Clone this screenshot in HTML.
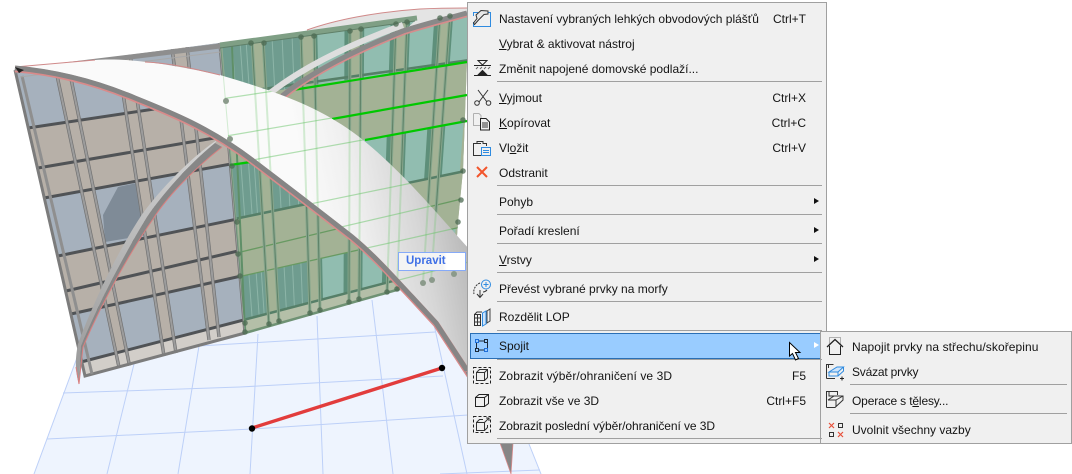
<!DOCTYPE html>
<html><head><meta charset="utf-8">
<style>
html,body{margin:0;padding:0;background:#fff;width:1072px;height:474px;overflow:hidden}
#s{position:absolute;left:0;top:0}
.menu{position:absolute;background:#f0f0f0;border:1px solid #a0a0a0;box-sizing:border-box}
.t,.k{position:absolute;font:12px/16px "Liberation Sans",sans-serif;color:#141414;white-space:nowrap}
.t{left:499px}
.k{right:266px}
.st{left:852px}
.sep{position:absolute;height:1px;background:#a0a0a0}
.hl{position:absolute;left:470px;top:333px;width:353px;height:26px;background:#99ccff;border:1px solid #2a6fb5;box-sizing:border-box}
.up{position:absolute;left:398px;top:252px;width:68px;height:19px;box-sizing:border-box;border:1.5px solid #86aaf8;background:linear-gradient(90deg,#f4f4f4 0,#f4f4f4 66%,#fff 72%);font:bold 11.5px/17px "Liberation Sans",sans-serif;color:#3f70e6;padding-left:7px}
</style></head><body>
<svg id="s" width="1072" height="474" viewBox="0 0 1072 474">
<defs>
<linearGradient id="sh" gradientUnits="userSpaceOnUse" x1="300" y1="160" x2="470" y2="126">
<stop offset="0" stop-color="#fafafa"/><stop offset=".25" stop-color="#f0f0f0"/><stop offset=".6" stop-color="#d6d6d6"/><stop offset="1" stop-color="#a8a8a8"/></linearGradient>
<linearGradient id="lg" gradientUnits="userSpaceOnUse" x1="80" y1="380" x2="200" y2="150">
<stop offset="0" stop-color="#9a9a9a"/><stop offset="1" stop-color="#d2d2d2"/></linearGradient>
<clipPath id="cs"><path d="M15,67 L95,60 C125,58 160,62 220,75 C270,90 320,105 363,140 C400,170 430,205 470,250 L470,376 L436,323 L412,297 C395,279 375,256 352,237 C320,212 285,185 252,160 C210,128 170,112 135,98 C92,80 50,71 15,68Z"/></clipPath>
<clipPath id="cg"><polygon points="220,43 470,9 470,270 245,333"/></clipPath>
<clipPath id="cw"><polygon points="15,70 470,9.500 467,60 463,170 458,222 453,290 85,376"/></clipPath>
<clipPath id="rows"><polygon points="15,70 470,9.500 470,61.500 28,128"/><polygon points="44,198 470,120.500 470,171 58,256"/><polygon points="71,314 470,225 470,261.600 81,362"/></clipPath>
<g id="ml">
<line x1="55" y1="66" x2="120" y2="372"/><line x1="68" y1="64" x2="130" y2="368"/>
<line x1="117" y1="55" x2="164" y2="356"/><line x1="130" y1="54" x2="176" y2="353"/>
<line x1="172" y1="48" x2="209" y2="340"/><line x1="187" y1="47" x2="219" y2="337"/>
<line x1="220" y1="43" x2="245" y2="332"/>
<line x1="252" y1="40" x2="269" y2="326"/><line x1="263" y1="38" x2="279" y2="323"/>
<line x1="301" y1="33" x2="310" y2="315"/><line x1="314" y1="31" x2="320" y2="312"/>
<line x1="350" y1="27" x2="349" y2="304"/><line x1="361" y1="25" x2="359" y2="301"/>
<line x1="396" y1="22" x2="387" y2="294"/><line x1="407" y1="20" x2="397" y2="291"/>
<line x1="440" y1="15" x2="423" y2="283"/><line x1="450" y1="14" x2="431" y2="281"/>
</g>
<g id="hz">
<line x1="28" y1="128" x2="470" y2="61.500"/><line x1="38" y1="168" x2="470" y2="94.500"/>
<line x1="44" y1="198" x2="470" y2="120.500"/><line x1="58" y1="256" x2="470" y2="171"/>
<line x1="66" y1="291" x2="470" y2="197"/><line x1="71" y1="314" x2="470" y2="225"/>
<line x1="81" y1="362" x2="470" y2="261.600"/>
</g>
</defs>
<!-- floor -->
<polygon points="78,355 470,255 525,434 541,474 34,474" fill="#eef4fe"/>
<g stroke="#bdd0f8" stroke-width="1" fill="none">
<line x1="78" y1="355" x2="34" y2="474"/><line x1="525" y1="434" x2="541" y2="474"/>
<line x1="134" y1="364" x2="107" y2="474"/><line x1="199" y1="346" x2="178" y2="474"/>
<line x1="258" y1="334" x2="250" y2="474"/><line x1="317" y1="316" x2="323" y2="474"/>
<line x1="372" y1="300" x2="393" y2="474"/><line x1="433" y1="320" x2="467" y2="474"/>
<line x1="63" y1="393" x2="240" y2="387"/><line x1="240" y1="387" x2="443" y2="376"/>
<line x1="47" y1="439" x2="252" y2="429"/><line x1="252" y1="429" x2="468" y2="415"/>
<line x1="199" y1="346" x2="435" y2="332"/><line x1="440" y1="474" x2="540" y2="470"/>
</g>
<!-- wall -->
<g clip-path="url(#cw)">
<polygon points="15,70 470,9.500 470,268.400 85,376" fill="#b7b0a8"/>
<g fill="#a6b1bd">
<polygon points="15,70 470,9.500 470,61.500 28,128"/>
<polygon points="44,198 470,120.500 470,171 58,256"/>
<polygon points="71,314 470,225 470,261.600 81,362"/>
</g>
<polygon points="103,215 118,187 137,183 146,235 105,242" fill="#7f8b97"/>
<g fill="#b7b0a8">
<polygon points="55,66 68,64 130,368 120,372"/>
<polygon points="117,55 130,54 176,353 164,356"/>
<polygon points="172,48 187,47 219,337 209,340"/>
</g>
<polygon points="81,362 470,261.600 470,268.400 85,376" fill="#d2cec9"/>
<use href="#hz" stroke="#505356" stroke-width="3"/>
<use href="#ml" stroke="#727272" stroke-width="3.400"/>
<use href="#ml" stroke="#9c9c9c" stroke-width="2"/>
<!-- green section -->
<g clip-path="url(#cg)">
<polygon points="220,43 470,9 470,270 245,333" fill="#a3b295"/>
<g clip-path="url(#rows)">
<polygon points="222,43 252,40 269,326 245,332" fill="#6f9c8f"/>
<polygon points="263,38 301,33 310,315 279,323" fill="#6f9c8f"/>
<polygon points="314,31 350,27 349,304 320,312" fill="#91bdb0"/>
<polygon points="361,25 396,22 387,294 359,301" fill="#91bdb0"/>
<polygon points="407,20 440,15 423,283 397,291" fill="#91bdb0"/>
<polygon points="450,14 472,10 452,276 431,281" fill="#91bdb0"/>
<g stroke="#8db5a8" stroke-width="1"><line x1="232" y1="42" x2="253" y2="330"/><line x1="240" y1="41" x2="260" y2="328"/><line x1="246" y1="40" x2="265" y2="327"/><line x1="272" y1="37" x2="287" y2="322"/><line x1="282" y1="36" x2="295" y2="320"/><line x1="292" y1="34" x2="303" y2="317"/></g>
<g stroke="#5e8f7a" stroke-width="5"><line x1="347" y1="27" x2="346" y2="304"/><line x1="393" y1="22" x2="384" y2="295"/><line x1="437" y1="15" x2="420" y2="284"/></g>
<g stroke="#5e8f7a" stroke-width="2.500"><line x1="316" y1="31" x2="322" y2="312"/><line x1="363" y1="25" x2="361" y2="300"/><line x1="409" y1="20" x2="399" y2="290"/><line x1="452" y1="14" x2="433" y2="281"/></g>
</g>
<polygon points="81,362 470,261.600 470,270 85,376" fill="#b4bfa8"/>
<g stroke="#567f68" stroke-width="2.500"><line x1="220" y1="95" x2="470" y2="60"/><line x1="220" y1="222" x2="470" y2="170"/><line x1="220" y1="326" x2="470" y2="261"/></g>
<g stroke="#689a62" stroke-width="1.300"><line x1="220" y1="257" x2="470" y2="197"/><line x1="220" y1="281" x2="470" y2="225"/></g>
<use href="#ml" stroke="#86a68c" stroke-width="3"/>
<use href="#ml" stroke="#5f8268" stroke-width="1"/>
<line x1="232" y1="46" x2="245" y2="332" stroke="#5f8f68" stroke-width="2"/>
</g>
</g>
<polyline points="15,70 85,376 245,333" fill="none" stroke="#7c7c7c" stroke-width="3"/>
<line x1="245" y1="333" x2="400" y2="289" stroke="#6f9274" stroke-width="2.500"/>
<line x1="22" y1="76" x2="92" y2="374" stroke="#8f8f8f" stroke-width="3"/>
<line x1="15" y1="71" x2="220" y2="46" stroke="#8e8e8e" stroke-width="5"/>
<line x1="20" y1="77" x2="220" y2="52" stroke="#a8a8a8" stroke-width="1"/>
<!-- bright green edges -->
<g stroke="#00c800" stroke-width="2.200">
<line x1="293" y1="90" x2="467" y2="62"/><line x1="332" y1="119" x2="467" y2="95"/>
<line x1="365" y1="140" x2="467" y2="121"/><line x1="230" y1="165" x2="251" y2="162"/></g>
<!-- sliver above wall top -->
<path d="M300,33 C330,21 380,11 420,9 C440,8 455,8 467,8 L467,13 L403,32 L417,19Z" fill="#e4e4e4"/>
<path d="M307,30 C335,20 375,12 420,9 C440,8 455,8 467,8" fill="none" stroke="#d08a8a" stroke-width="1"/>
<line x1="220" y1="45" x2="417" y2="18" stroke="#7f9f85" stroke-width="5"/>
<line x1="220" y1="48" x2="415" y2="21" stroke="#5f7f68" stroke-width="1"/>
<!-- arch upper -->
<path d="M270,93 C300,70 340,48 403,25" fill="none" stroke="#dedede" stroke-width="6"/>
<path d="M282,97 C310,74 353,52 403,32 C425,25 445,20 467,14" fill="none" stroke="#d58c8c" stroke-width="6.500"/>
<path d="M282,96 C310,73 353,51 403,31 C425,24 445,19 467,13" fill="none" stroke="#898989" stroke-width="5"/>
<!-- arch leg -->
<path d="M217,140 C190,158 160,190 143,213 C125,240 100,285 78,344 C75,358 75,372 79,384 L81,346 C102,295 130,245 147,217 C162,195 188,165 215,143Z" fill="url(#lg)"/>
<path d="M215,143 C188,165 162,195 147,217 C130,245 102,295 81,346 L79,384 L83,347 C105,295 135,245 153,219 C165,200 190,172 222,147Z" fill="#878787"/>
<path d="M222,147 C190,172 165,200 153,219 C135,245 105,295 83,347 L79,384 L76,367" fill="none" stroke="#d97f7f" stroke-width="1"/>
<!-- shell -->
<path d="M15,67 L95,60 C125,58 160,62 220,75 C270,90 320,105 363,140 C400,170 430,205 470,250 L470,376 L436,323 L412,297 C395,279 375,256 352,237 C320,212 285,185 252,160 C210,128 170,112 135,98 C92,80 50,71 15,68Z" fill="url(#sh)"/>
<path d="M15,67 L95,60 M145,62 C170,63 195,69 220,75" fill="none" stroke="#d08a8a" stroke-width="1"/>
<g clip-path="url(#cs)"><g clip-path="url(#cg)">
<use href="#hz" stroke="#68c468" stroke-opacity=".5" stroke-width="1.200"/>
<use href="#ml" stroke="#68c468" stroke-opacity=".27" stroke-width="2"/>
</g></g>
<!-- lower thick arc -->
<path d="M15,69 C50,72 92,81 135,99 C170,113 210,129 252,161 C285,186 320,213 352,238 C375,257 395,280 412,298 L436,324 L470,376" fill="none" stroke="#d98a8a" stroke-width="6.500"/>
<path d="M15,68 C50,71 92,80 135,98 C170,112 210,128 252,160 C285,185 320,212 352,237 C375,256 395,279 412,297 L436,323 L470,375" fill="none" stroke="#858585" stroke-width="5"/>
<polygon points="465,372 473,370 513,443 511,474 500,443" fill="#868686" stroke="#d98a8a" stroke-width=".8"/>
<polygon points="15,67 24,70 19,73" fill="#222"/>
<!-- hotspots -->
<g fill="#4c6a52" fill-opacity=".75">
<circle cx="251" cy="43" r="2.800"/><circle cx="264" cy="43" r="2.800"/><circle cx="301" cy="37" r="2.800"/><circle cx="314" cy="36" r="2.800"/>
<circle cx="350" cy="31" r="2.800"/><circle cx="361" cy="29" r="2.800"/><circle cx="396" cy="24" r="2.800"/><circle cx="407" cy="22" r="2.800"/>
<circle cx="440" cy="18" r="2.800"/><circle cx="450" cy="16" r="2.800"/>
<circle cx="232" cy="166" r="2.800"/><circle cx="237" cy="222" r="2.800"/><circle cx="238" cy="254" r="2.800"/><circle cx="240" cy="276" r="2.800"/><circle cx="245" cy="323" r="2.800"/><circle cx="245" cy="332" r="2.800"/>
<circle cx="269" cy="324" r="2.800"/><circle cx="279" cy="321" r="2.800"/><circle cx="310" cy="313" r="2.800"/><circle cx="320" cy="310" r="2.800"/>
<circle cx="349" cy="302" r="2.800"/><circle cx="359" cy="299" r="2.800"/><circle cx="387" cy="292" r="2.800"/><circle cx="397" cy="289" r="2.800"/>
<circle cx="463" cy="120" r="2.800"/><circle cx="463" cy="171" r="2.800"/><circle cx="461" cy="200" r="2.800"/><circle cx="458" cy="222" r="2.800"/>
</g>
<g fill="#8b9a8b">
<circle cx="226" cy="101" r="3"/><circle cx="230" cy="139" r="3"/><circle cx="423" cy="283" r="3"/><circle cx="432" cy="280" r="3"/><circle cx="454" cy="274" r="3"/></g>
<!-- red line -->
<line x1="252" y1="428" x2="442" y2="368" stroke="#e23c3c" stroke-width="3.400"/>
<circle cx="252" cy="428.500" r="3.200" fill="#000"/><circle cx="442" cy="368" r="3.200" fill="#000"/>
</svg>

<div class="up">Upravit</div>

<div class="menu" style="left:467px;top:2px;width:360px;height:442px"></div>
<div class="hl"></div>
<div class="menu" style="left:820px;top:331px;width:252px;height:113px"></div>

<div class="sep" style="left:497px;top:81px;width:325px"></div>
<div class="sep" style="left:497px;top:185px;width:325px"></div>
<div class="sep" style="left:497px;top:214px;width:325px"></div>
<div class="sep" style="left:497px;top:243px;width:325px"></div>
<div class="sep" style="left:497px;top:272px;width:325px"></div>
<div class="sep" style="left:497px;top:301px;width:325px"></div>
<div class="sep" style="left:497px;top:330px;width:325px"></div>
<div class="sep" style="left:497px;top:359px;width:325px"></div>
<div class="sep" style="left:497px;top:438px;width:325px"></div>
<div class="sep" style="left:850px;top:384px;width:217px"></div>
<div class="sep" style="left:850px;top:413px;width:217px"></div>

<div class="t" style="top:11px">Nastavení vybraných lehkých obvodových plášťů</div><div class="k" style="top:11px">Ctrl+T</div>
<div class="t" style="top:36px"><u>V</u>ybrat &amp; aktivovat nástroj</div>
<div class="t" style="top:61px">Změnit napojené domovské podlaží...</div>
<div class="t" style="top:90px"><u>V</u>yjmout</div><div class="k" style="top:90px">Ctrl+X</div>
<div class="t" style="top:115px"><u>K</u>opírovat</div><div class="k" style="top:115px">Ctrl+C</div>
<div class="t" style="top:140px">Vl<u>o</u>žit</div><div class="k" style="top:140px">Ctrl+V</div>
<div class="t" style="top:165px">Odstranit</div>
<div class="t" style="top:194px">Pohyb</div>
<div class="t" style="top:223px">Pořadí kreslení</div>
<div class="t" style="top:252px"><u>V</u>rstvy</div>
<div class="t" style="top:281px">Převést vybrané prvky na morfy</div>
<div class="t" style="top:309px">Rozdělit LOP</div>
<div class="t" style="top:338px">Spojit</div>
<div class="t" style="top:368px;letter-spacing:.1px">Zobrazit výběr/ohraničení ve 3D</div><div class="k" style="top:368px">F5</div>
<div class="t" style="top:393px">Zobrazit vše ve 3D</div><div class="k" style="top:393px">Ctrl+F5</div>
<div class="t" style="top:418px;letter-spacing:-.07px">Zobrazit poslední výběr/ohraničení ve 3D</div>
<div class="t st" style="top:339px;letter-spacing:.07px">Napojit prvky na střechu/skořepinu</div>
<div class="t st" style="top:364px;letter-spacing:-.2px">Svázat prvky</div>
<div class="t st" style="top:393px;letter-spacing:-.15px">Operace s t<u>ě</u>lesy...</div>
<div class="t st" style="top:422px">Uvolnit všechny vazby</div>

<svg style="position:absolute;left:0;top:0" width="1072" height="474" viewBox="0 0 1072 474" fill="none" stroke-width="1">
<!-- arrows -->
<g stroke="none" fill="#111"><polygon points="814,198 819,201 814,204"/><polygon points="814,227 819,230 814,233"/><polygon points="814,256 819,259 814,262"/></g>
<polygon points="814,342 819,345 814,348" fill="#fff"/>
<!-- hammer -->
<path d="M473.500,16V12.500H478M486,12.500H490.500V26.500H473.500V22" stroke="#2f8be0"/>
<path d="M476,15L481,10.500L488,11L488,14L484,14.500L478.500,20L474.500,24.500L473.500,23L477,18.500Z" fill="#e8e8e8" stroke="#333"/>
<!-- level -->
<g stroke="#222"><path d="M474,65.500H491M474,75.500H491"/><path d="M478,60.500H487L482.500,65Z" fill="#f0f0f0"/><path d="M478,75L482.500,70.500L487,75Z" fill="#222"/><path d="M476,69L478,67M480,69L482,67M484,69L486,67M488,69L490,67" stroke="#666"/></g>
<!-- scissors -->
<g stroke="#333"><path d="M478,90L487,102M488,90L479,102"/><circle cx="477" cy="103" r="2.300"/><circle cx="488.500" cy="103" r="2.300"/></g>
<!-- copy -->
<path d="M473.500,113.500H479L481,115.500V118M473.500,113.500V125.500H480" stroke="#b0b0b0"/>
<path d="M480.500,118.500H486L489.500,122V130H480.500Z" fill="#f0f0f0" stroke="#222"/><path d="M482,123H488M482,125H488M482,127H488" stroke="#333"/>
<!-- paste -->
<path d="M481,143.500H473.500V155.500H481M485,143.500H486.500V146" stroke="#333"/><path d="M477,143.500V141.500H483V143.500H485.500" stroke="#333"/>
<rect x="481.500" y="147.500" width="9" height="8" fill="#f0f0f0" stroke="#2f8be0"/><path d="M483,150.500H489M483,152.500H489" stroke="#2f8be0"/>
<!-- X -->
<path d="M477,167L487,177M487,167L477,177" stroke="#f2552c" stroke-width="2"/>
<!-- convert -->
<path d="M480,283C475,285 473,290 474,294" stroke="#333" stroke-dasharray="2 1"/><path d="M480,290V297M477,294L480,297.500L483,294" stroke="#333"/><path d="M483,292C485,292 486,291 487,290" stroke="#333"/>
<circle cx="486" cy="284.500" r="4.500" fill="#f0f0f0" stroke="#2f8be0"/><path d="M483.500,284.500H488.500M486,282V287" stroke="#2f8be0"/>
<!-- split -->
<path d="M474.500,314.500H480.500V325.500H474.500ZM474.500,318H480.500M474.500,322H480.500M477.500,314.500V325.500M474.500,314.500L477,312H482" stroke="#333"/>
<path d="M482.500,313V326L486,324V311Z" stroke="#2f8be0" fill="#cfe4fa"/><path d="M487,311L490,309V321L487,323Z" stroke="#444"/>
<!-- join -->
<path d="M478,341H484M478,350H484M476.500,343V348M487.500,343V348" stroke="#1b2a3a"/>
<rect x="475.500" y="339.500" width="3" height="3" stroke="#1f6fd8" fill="#99ccff"/><rect x="484.500" y="339.500" width="3" height="3" stroke="#1b2a3a"/>
<rect x="475.500" y="348.500" width="3" height="3" stroke="#1b2a3a"/><rect x="484.500" y="348.500" width="3" height="3" stroke="#1f6fd8" fill="#99ccff"/>
<!-- cube dashed -->
<rect x="473.500" y="367.500" width="17" height="16" stroke="#222" stroke-dasharray="3 2"/>
<path d="M476.500,372.500H484.500V380.500H476.500ZM476.500,372.500L479.500,369.500H487.500V377.500L484.500,380.500M484.500,372.500L487.500,369.500" stroke="#333"/>
<!-- cube -->
<path d="M475.500,397.500H484.500V406.500H475.500ZM475.500,397.500L479,394.500H488.500V403.500L484.500,406.500M484.500,397.500L488.500,394.500" stroke="#222"/>
<!-- cube dashed arrow -->
<rect x="473.500" y="416.500" width="17" height="16" stroke="#222" stroke-dasharray="3 2"/>
<path d="M476.500,422.500H484.500V430.500H476.500ZM476.500,422.500L479.500,419.500H483M487.500,425V427.500L484.500,430.500M484.500,422.500L489,418M486,418H489V421" stroke="#333"/>
<!-- house -->
<rect x="829.500" y="337.500" width="11" height="9" stroke="#b0b0b0"/>
<path d="M829.500,346V354.500H840.500V346" stroke="#222" fill="#f0f0f0"/>
<path d="M827,347L835,339.500L843,347" stroke="#222" stroke-width="1.300"/>
<!-- bind -->
<path d="M826.500,378.500V364.500H833.500M826.500,378.500H835M828.500,364.500V368" stroke="#333"/>
<path d="M829,372L837,367H843.500L838,372Z" fill="#cfe4fa" stroke="#2f8be0"/><path d="M829,372V376H838L843.500,371V367M838,372V376" stroke="#2f8be0"/><path d="M840,378.500H844M842,376.500V380.500" stroke="#222"/>
<!-- solid ops -->
<path d="M826.500,407.500V391.500H837.500V395M826.500,407.500H835L843,400V396H834L828,400" stroke="#333"/><path d="M829,391.500V396H838M828,400H836V407M836,400L843,396" stroke="#333"/>
<!-- release -->
<path d="M829,423L834,428M834,423L829,428M838,432L843,437M843,432L838,437" stroke="#e8503a" stroke-width="1.200"/>
<rect x="838.500" y="423.500" width="4" height="4" stroke="#333"/><rect x="829.500" y="432.500" width="4" height="4" stroke="#333"/>
<!-- cursor -->
<path d="M789.500,342.500V356L792.500,353.500L795.500,360L798.500,358.500L795.500,352.500H800Z" fill="#fff" stroke="#000"/>
</svg>
</body></html>
